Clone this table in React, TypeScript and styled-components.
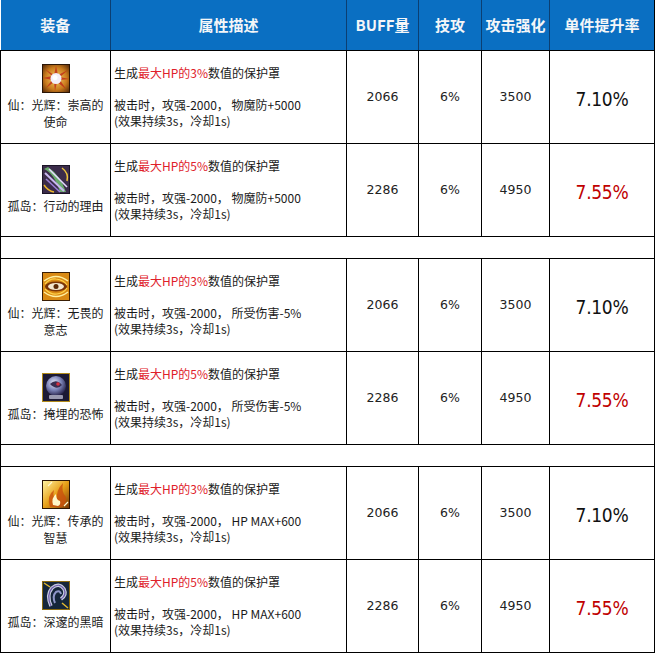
import React from "react";
import styled, { createGlobalStyle } from "styled-components";

type IconKind = "sun" | "blade" | "eye" | "orb" | "flame" | "hook";

type Row = {
  name: string;
  icon: IconKind;
  pct: string;
  effect: string;
  buff: string;
  skill: string;
  atk: string;
  rate: string;
  best?: boolean;
};

const groups: Row[][] = [
  [
    { name: "仙：光辉：崇高的使命", icon: "sun", pct: "3%", effect: "物魔防+5000", buff: "2066", skill: "6%", atk: "3500", rate: "7.10%" },
    { name: "孤岛：行动的理由", icon: "blade", pct: "5%", effect: "物魔防+5000", buff: "2286", skill: "6%", atk: "4950", rate: "7.55%", best: true },
  ],
  [
    { name: "仙：光辉：无畏的意志", icon: "eye", pct: "3%", effect: "所受伤害-5%", buff: "2066", skill: "6%", atk: "3500", rate: "7.10%" },
    { name: "孤岛：掩埋的恐怖", icon: "orb", pct: "5%", effect: "所受伤害-5%", buff: "2286", skill: "6%", atk: "4950", rate: "7.55%", best: true },
  ],
  [
    { name: "仙：光辉：传承的智慧", icon: "flame", pct: "3%", effect: "HP MAX+600", buff: "2066", skill: "6%", atk: "3500", rate: "7.10%" },
    { name: "孤岛：深邃的黑暗", icon: "hook", pct: "5%", effect: "HP MAX+600", buff: "2286", skill: "6%", atk: "4950", rate: "7.55%", best: true },
  ],
];

const ItemIcon = ({ kind }: { kind: IconKind }) => {
  switch (kind) {
    case "sun":
      return (
        <svg width="28" height="29" viewBox="0 0 28 29">
          <defs>
            <radialGradient id="sunBg" cx="50%" cy="50%" r="70%">
              <stop offset="0%" stopColor="#f8d36a" />
              <stop offset="60%" stopColor="#c97a1c" />
              <stop offset="100%" stopColor="#5a2c08" />
            </radialGradient>
          </defs>
          <rect x="0" y="0" width="28" height="29" fill="#2a1506" />
          <rect x="1" y="1" width="26" height="27" fill="url(#sunBg)" />
          <path d="M14 2 L16 11 L26 6 L18 13 L27 15 L18 16 L24 25 L15 18 L13 27 L12 18 L4 24 L10 16 L1 14 L10 12 L3 5 L12 11 Z" fill="#c0301a" opacity="0.85" />
          <circle cx="14" cy="14.5" r="5.5" fill="#f3eef8" />
          <circle cx="13" cy="13.5" r="2.5" fill="#ffffff" />
        </svg>
      );
    case "blade":
      return (
        <svg width="28" height="29" viewBox="0 0 28 29">
          <rect x="0" y="0" width="28" height="29" fill="#1b1426" />
          <rect x="1" y="1" width="26" height="27" fill="#3b2c4a" />
          <path d="M2 4 Q12 8 18 27 L24 27 Q18 10 6 2 Z" fill="#7de07a" opacity="0.7" />
          <path d="M3 8 L22 26" stroke="#c9b8f0" strokeWidth="2" />
          <path d="M7 4 L25 22" stroke="#e6dcff" strokeWidth="1.6" />
          <path d="M4 14 L18 27" stroke="#9a7fd6" strokeWidth="1.6" />
          <path d="M20 3 Q27 8 25 16" stroke="#f0c83a" strokeWidth="1.5" fill="none" />
          <path d="M2 20 Q6 26 12 27" stroke="#e9b42a" strokeWidth="1.5" fill="none" />
        </svg>
      );
    case "eye":
      return (
        <svg width="28" height="29" viewBox="0 0 28 29">
          <rect x="0" y="0" width="28" height="29" fill="#3a1e04" />
          <rect x="1" y="1" width="26" height="27" fill="#d98a14" />
          <path d="M2 9 Q14 0 26 9" stroke="#fff0a0" strokeWidth="1.5" fill="none" />
          <path d="M2 20 Q14 29 26 20" stroke="#fff0a0" strokeWidth="1.5" fill="none" />
          <ellipse cx="14" cy="14.5" rx="11" ry="5" fill="#7a3508" />
          <ellipse cx="14" cy="14.5" rx="8" ry="3.5" fill="#f4e8d0" />
          <circle cx="14" cy="14.5" r="2.5" fill="#5a2806" />
          <path d="M3 12 Q8 6 14 7 Q22 8 25 13" stroke="#ffd34a" strokeWidth="1.2" fill="none" />
          <path d="M3 17 Q9 23 15 22 Q22 21 25 16" stroke="#ffd34a" strokeWidth="1.2" fill="none" />
        </svg>
      );
    case "orb":
      return (
        <svg width="28" height="29" viewBox="0 0 28 29">
          <defs>
            <radialGradient id="orbBg" cx="40%" cy="35%" r="65%">
              <stop offset="0%" stopColor="#e8eaf8" />
              <stop offset="55%" stopColor="#7c84b8" />
              <stop offset="100%" stopColor="#2c2850" />
            </radialGradient>
          </defs>
          <rect x="0" y="0" width="28" height="29" fill="#b08a1a" />
          <rect x="1" y="1" width="26" height="27" fill="#1c1a34" />
          <circle cx="14" cy="13" r="10" fill="url(#orbBg)" />
          <path d="M8 11 Q14 5 20 12 Q15 18 8 11 Z" fill="#3a2e50" />
          <circle cx="16" cy="11" r="1.8" fill="#d83040" />
          <rect x="7" y="22" width="14" height="4" rx="1" fill="#9a9ab0" />
        </svg>
      );
    case "flame":
      return (
        <svg width="28" height="29" viewBox="0 0 28 29">
          <defs>
            <linearGradient id="flameBg" x1="0" y1="0" x2="1" y2="1">
              <stop offset="0%" stopColor="#fff2a0" />
              <stop offset="50%" stopColor="#e8a018" />
              <stop offset="100%" stopColor="#7a3a06" />
            </linearGradient>
          </defs>
          <rect x="0" y="0" width="28" height="29" fill="#2e1604" />
          <rect x="1" y="1" width="26" height="27" fill="url(#flameBg)" />
          <path d="M8 27 Q4 16 12 10 Q10 18 15 19 Q14 10 21 3 Q19 12 24 17 Q25 24 20 27 Z" fill="#c8500c" opacity="0.8" />
          <path d="M11 25 Q9 18 14 14 Q14 20 18 21 Q19 25 16 26 Z" fill="#fff6c8" />
          <path d="M6 6 L10 2 M22 26 L26 22" stroke="#fff8d0" strokeWidth="1.2" />
        </svg>
      );
    case "hook":
      return (
        <svg width="28" height="29" viewBox="0 0 28 29">
          <rect x="0" y="0" width="28" height="29" fill="#8a6a10" />
          <rect x="1" y="1" width="26" height="27" fill="#15263a" />
          <path d="M2 2 L8 6 M26 27 L20 22" stroke="#e0b830" strokeWidth="1.5" />
          <path d="M9 25 Q4 14 10 7 Q17 1 22 8 Q25 14 19 18" stroke="#c8cde0" strokeWidth="3.5" fill="none" />
          <path d="M9 25 Q4 14 10 7 Q17 1 22 8 Q25 14 19 18" stroke="#6a5aa8" strokeWidth="1.2" fill="none" />
          <path d="M13 22 Q10 15 14 11 Q18 9 19 13" stroke="#8e96c8" strokeWidth="2" fill="none" />
        </svg>
      );
  }
};

const App = () => {
  return (
    <>
      <GlobalStyle />
      <Table>
        <colgroup>
          <col style={{ width: 110 }} />
          <col style={{ width: 236 }} />
          <col style={{ width: 72 }} />
          <col style={{ width: 63 }} />
          <col style={{ width: 68 }} />
          <col style={{ width: 105 }} />
        </colgroup>
        <thead>
          <HeadRow>
            <Th>装备</Th>
            <Th>属性描述</Th>
            <Th>BUFF量</Th>
            <Th>技攻</Th>
            <Th>攻击强化</Th>
            <Th>单件提升率</Th>
          </HeadRow>
        </thead>
        <tbody>
          {groups.map((group, gi) => (
            <React.Fragment key={gi}>
              {gi > 0 && (
                <SpacerRow>
                  <Td colSpan={6} />
                </SpacerRow>
              )}
              {group.map((row) => (
                <BodyRow key={row.name}>
                  <Td>
                    <NameCell>
                      <ItemIcon kind={row.icon} />
                      <Name>{row.name}</Name>
                    </NameCell>
                  </Td>
                  <DescTd>
                    <Line>
                      生成<Red>最大HP的{row.pct}</Red>数值的保护罩
                    </Line>
                    <Blank />
                    <Line>被击时，攻强-2000， {row.effect}</Line>
                    <Line>(效果持续3s，冷却1s)</Line>
                  </DescTd>
                  <NumTd>{row.buff}</NumTd>
                  <NumTd>{row.skill}</NumTd>
                  <NumTd>{row.atk}</NumTd>
                  <RateTd $best={row.best}>{row.rate}</RateTd>
                </BodyRow>
              ))}
            </React.Fragment>
          ))}
        </tbody>
      </Table>
    </>
  );
};

export default App;

const GlobalStyle = createGlobalStyle`
  body {
    margin: 0;
    background: #ffffff;
    font-family: "Noto Sans CJK SC", "Noto Sans", sans-serif;
  }
`;

const Table = styled.table`
  width: 654px;
  table-layout: fixed;
  border-collapse: collapse;
  color: #1a1a1a;
`;

const HeadRow = styled.tr`
  height: 50px;
  background: #0a6fc2;
`;

const Th = styled.th`
  border: 1px solid #0b3f72;
  border-top: none;
  border-bottom: 1px solid #000;
  padding: 0;
  color: #f4f6f8;
  font-size: 15px;
  font-weight: 700;
  text-align: center;
  &:first-child {
    border-left: none;
  }
  &:last-child {
    border-right: 1px solid #000;
  }
`;

const BodyRow = styled.tr`
  height: 93px;
`;

const SpacerRow = styled.tr`
  height: 22px;
`;

const Td = styled.td`
  border: 1px solid #000;
  padding: 0;
  text-align: center;
  vertical-align: middle;
`;

const NameCell = styled.div`
  display: flex;
  flex-direction: column;
  align-items: center;
  gap: 3px;
  padding: 0 3px;
`;

const Name = styled.div`
  font-size: 12px;
  line-height: 17px;
  color: #1a1a1a;
`;

const DescTd = styled(Td)`
  text-align: left;
  padding-left: 3px;
  font-size: 12px;
  line-height: 16px;
  color: #1a1a1a;
`;

const Line = styled.div`
  white-space: nowrap;
`;

const Blank = styled.div`
  height: 16px;
`;

const Red = styled.span`
  color: #e0202a;
`;

const NumTd = styled(Td)`
  font-family: "DejaVu Sans", "Noto Sans", sans-serif;
  font-size: 12.5px;
  color: #222;
`;

const RateTd = styled(Td)<{ $best?: boolean }>`
  font-family: "DejaVu Sans Condensed", "DejaVu Sans", sans-serif;
  font-size: 19px;
  letter-spacing: -0.3px;
  color: ${(p) => (p.$best ? "#c00000" : "#111")};
  padding-top: 5px;
`;
